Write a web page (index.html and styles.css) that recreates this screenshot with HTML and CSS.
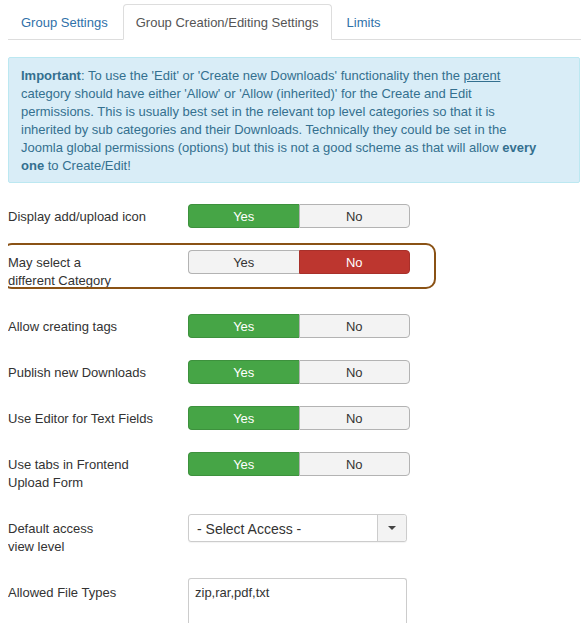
FILE: index.html
```html
<!DOCTYPE html>
<html>
<head>
<meta charset="utf-8">
<link rel="stylesheet" href="styles.css">
</head>
<body>
<ul class="tabs">
  <li class="tab"><a>Group Settings</a></li>
  <li class="tab active"><a>Group Creation/Editing Settings</a></li>
  <li class="tab"><a>Limits</a></li>
</ul>
<div class="content">
  <div class="alert">
    <b>Important</b>: To use the 'Edit' or 'Create new Downloads' functionality then the <u>parent</u><br>
    category should have either 'Allow' or 'Allow (inherited)' for the Create and Edit<br>
    permissions. This is usually best set in the relevant top level categories so that it is<br>
    inherited by sub categories and their Downloads. Technically they could be set in the<br>
    Joomla global permissions (options) but this is not a good scheme as that will allow <b>every</b><br>
    <b>one</b> to Create/Edit!
  </div>

  <div class="form">
    <div class="row">
      <div class="label">Display add/upload icon</div>
      <div class="toggle"><span class="btn yes on">Yes</span><span class="btn no">No</span></div>
    </div>
    <div class="row row-marked">
      <span class="marker"></span>
      <div class="label">May select a<br>different Category</div>
      <div class="toggle"><span class="btn yes">Yes</span><span class="btn no off">No</span></div>
    </div>
    <div class="row">
      <div class="label">Allow creating tags</div>
      <div class="toggle"><span class="btn yes on">Yes</span><span class="btn no">No</span></div>
    </div>
    <div class="row">
      <div class="label">Publish new Downloads</div>
      <div class="toggle"><span class="btn yes on">Yes</span><span class="btn no">No</span></div>
    </div>
    <div class="row">
      <div class="label">Use Editor for Text Fields</div>
      <div class="toggle"><span class="btn yes on">Yes</span><span class="btn no">No</span></div>
    </div>
    <div class="row">
      <div class="label">Use tabs in Frontend<br>Upload Form</div>
      <div class="toggle"><span class="btn yes on">Yes</span><span class="btn no">No</span></div>
    </div>
    <div class="row">
      <div class="label label-field">Default access<br>view level</div>
      <div class="select">
        <span class="select-text">- Select Access -</span>
        <span class="select-caret"><svg width="8" height="4" viewBox="0 0 8 4"><path d="M0 0h8L4 4z" fill="#444"/></svg></span>
      </div>
    </div>
    <div class="row row-last">
      <div class="label label-field">Allowed File Types</div>
      <div class="textarea">zip,rar,pdf,txt</div>
    </div>
  </div>
</div>
</body>
</html>
```

FILE: styles.css
```css
html, body {
  background: #fff;
}
body {
  margin: 0 0 0 8px;
  font-family: "Liberation Sans", Arial, sans-serif;
  font-size: 13px;
  line-height: 18px;
  color: #333;
}
.tabs {
  list-style: none;
  margin: 4px 0 0 0;
  padding: 0;
  display: flex;
  border-bottom: 1px solid #ddd;
}
.tab {
  margin-right: 2px;
  margin-bottom: -1px;
}
.tab a {
  display: block;
  padding: 9px 12px 7px;
  line-height: 18px;
  border: 1px solid transparent;
  border-radius: 4px 4px 0 0;
  color: #3071a9;
}
.tab.active a {
  color: #555;
  background: #fff;
  border-color: #ddd #ddd transparent #ddd;
}
.content {
  padding-top: 17px;
}
.alert {
  margin-right: 1px;
  background: #d9edf7;
  border: 1px solid #bce8f1;
  border-radius: 2px;
  color: #34708f;
  padding: 9px 12px 7px;
  line-height: 18px;
  white-space: nowrap;
}
.alert b {
  font-weight: bold;
}
.form {
  padding-top: 21px;
}
.row {
  display: flex;
  align-items: flex-start;
  margin-bottom: 22px;
}
.row-last {
  margin-bottom: 0;
}
.row-marked {
  position: relative;
  margin-bottom: 24px;
}
.marker {
  position: absolute;
  left: -6px;
  top: -7px;
  width: 434px;
  height: 46px;
  box-sizing: border-box;
  border: 2px solid #8a5215;
  border-radius: 10px;
}
.label {
  width: 180px;
  padding-top: 4px;
  flex: none;
}
.label-field {
  padding-top: 6px;
}
.toggle {
  display: flex;
  width: 222px;
  height: 24px;
}
.btn {
  flex: 1;
  display: flex;
  align-items: center;
  justify-content: center;
  box-sizing: border-box;
  padding-top: 1px;
  background: #f3f3f3;
  border: 1px solid #b3b3b3;
  color: #333;
}
.btn.yes {
  border-radius: 4px 0 0 4px;
  border-right: none;
}
.btn.no {
  border-radius: 0 4px 4px 0;
}
.btn.on {
  background: #46a546;
  border-color: #3d913d;
  color: #fff;
}
.btn.off {
  background: #bd362f;
  border-color: #a8302a;
  color: #fff;
}
.select {
  display: flex;
  width: 219px;
  height: 28px;
  box-sizing: border-box;
  border: 1px solid #ccc;
  border-radius: 3px;
  background: #fff;
  box-shadow: 0 1px 1px rgba(0,0,0,0.05);
}
.select-text {
  flex: 1;
  padding-left: 8px;
  padding-top: 1px;
  line-height: 26px;
  color: #333;
  font-size: 14px;
}
.select-caret {
  width: 28px;
  display: flex;
  align-items: center;
  justify-content: center;
  background: #f3f3f3;
  border-left: 1px solid #ccc;
  border-radius: 0 3px 3px 0;
}
.textarea {
  width: 219px;
  height: 45px;
  box-sizing: border-box;
  border: 1px solid #ccc;
  border-bottom: none;
  border-radius: 3px 3px 0 0;
  padding: 5px 6px 0;
  color: #333;
}
```
